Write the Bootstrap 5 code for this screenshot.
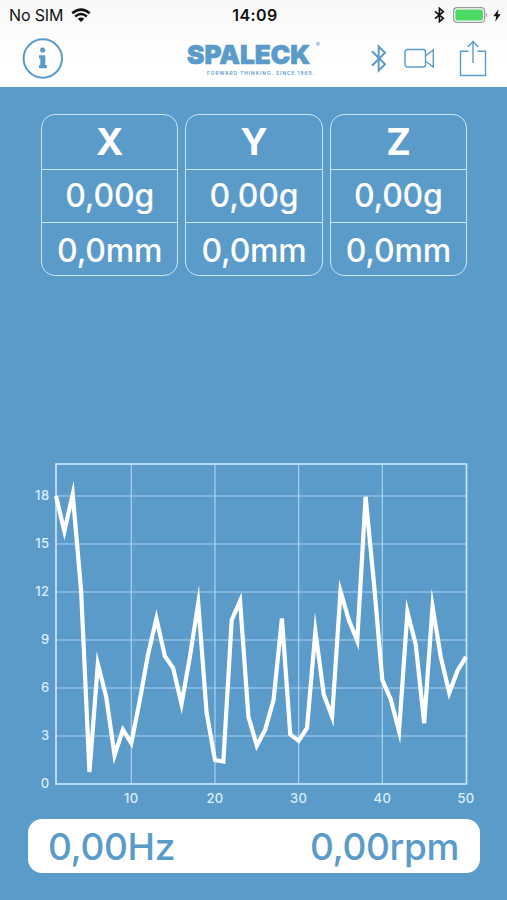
<!DOCTYPE html>
<html lang="en">
<head>
<meta charset="utf-8">
<meta name="viewport" content="width=device-width, initial-scale=1">
<title>Spaleck</title>
<link href="https://cdn.jsdelivr.net/npm/bootstrap@5.3.0/dist/css/bootstrap.min.css" rel="stylesheet">
<style>
:root { --brand: #5b9bca; --rule: #c9e4f7; }
body { font-family: Inter, "Liberation Sans", sans-serif; background: var(--brand); height: 900px; overflow: hidden; }
svg { display: block; flex: none; }
.app { width: 507px; height: 900px; }
.topbar { height: 87px; background: linear-gradient(#f8f8f8, #fff 60px); color: var(--brand); }
.status { height: 30px; color: #111; font-size: 16px; line-height: 30px; padding: 0 6px 0 9px; }
.status .side { width: 180px; }
.carrier { letter-spacing: -.15px; }
.clock { font-weight: 600; letter-spacing: .4px; }
.tools { height: 57px; padding: 0 20px 0 22px; }
.logo { margin-left: 121px; }
.bt { margin-left: 45px; }
.cam { margin-left: 16px; }
.share { margin-left: 23px; }
.axes { padding: 27px 40px 0 41px; gap: 7px; }
.axis { border: 1.5px solid var(--rule); border-radius: 14px; height: 162px; color: #fff; background: transparent; overflow: hidden; flex: 1 1 0; }
.axis > div { height: 53.5px; padding-top: 1px; display: flex; align-items: center; justify-content: center; font-size: 32px; font-weight: 500; line-height: 1; letter-spacing: -.2px; }
.axis > div + div { border-top: 1.5px solid var(--rule); }
.axis > div:last-child { padding-top: 3px; }
.axis > .axis-name { font-size: 37px; font-weight: 700; padding-top: 0; }
.plot { margin-top: 178px; }
.readout { height: 54px; margin: 1px 27px 0 28px; padding: 1px 21px 0 20px; border-radius: 14px; background: #fff; color: var(--brand); font-size: 37px; font-weight: 500; letter-spacing: -.35px; line-height: 54px; }
</style>
<script src="https://cdn.jsdelivr.net/npm/bootstrap@5.3.0/dist/js/bootstrap.bundle.min.js"></script>
</head>
<body>
<div class="app d-flex flex-column">
  <header class="topbar">
    <div class="status d-flex justify-content-between align-items-center">
      <div class="side d-flex align-items-center">
        <span class="carrier">No SIM</span>
        <svg class="ms-2" width="20" height="15" viewBox="0 0 20 15" fill="none" stroke="#111" stroke-width="2.6"><path d="M1.3 5.3Q10-2.2 18.700 5.300"/><path d="M4.200 8.400Q10 3.600 15.800 8.400"/><path d="M10 14 6.700 10.700Q10 8.200 13.300 10.700Z" fill="#111" stroke="none"/></svg>
      </div>
      <span class="clock">14:09</span>
      <div class="side d-flex justify-content-end align-items-center">
        <svg width="11" height="16" viewBox="0 0 11 16" fill="none" stroke="#111" stroke-width="1.600"><path d="M1 4.300 9.300 11.300 5.400 14.700V1.300L9.300 4.700 1 11.700"/></svg>
        <svg class="ms-2" width="36" height="16" viewBox="0 0 36 16"><rect x=".6" y=".7" width="31" height="14.600" rx="3.500" fill="#fff" stroke="#999" stroke-width="1.200"/><rect x="2.300" y="2.400" width="27.600" height="11.200" rx="1.800" fill="#4cd964"/><path d="M33.200 5.500q2 2.500 0 5z" fill="#999"/></svg>
        <svg class="ms-1" width="8" height="13" viewBox="0 0 8 13"><path d="M5.600.3.300 7.300h3L2.200 12.700 7.700 5.300H4.700z" fill="#111"/></svg>
      </div>
    </div>
    <nav class="tools d-flex align-items-center" aria-label="Tools">
      <svg width="42" height="42" viewBox="0 0 42 42"><circle cx="20.800" cy="20.500" r="19.200" fill="none" stroke="#5b9bca" stroke-width="2"/><circle cx="20.700" cy="12" r="2.600" fill="#5b9bca"/><path d="M17 17.300h6.300v9.700h1.500v3.300h-7.800V27H18.300v-6.500H17z" fill="#5b9bca"/></svg>
      <svg class="logo" width="140" height="42" viewBox="0 0 140 42" fill="#5b9bca" font-family="Inter, sans-serif"><text x="2" y="25.700" font-size="26" font-weight="900" textLength="123" lengthAdjust="spacingAndGlyphs" stroke="#5b9bca" stroke-width=".7">SPALECK</text><text x="131" y="8.500" font-size="5.500">®</text><text x="22" y="37.300" font-size="4.800" font-weight="600" textLength="107">FORWARD THINKING. SINCE 1869.</text></svg>
      <svg class="bt" width="18" height="30" viewBox="0 0 18 30" fill="none" stroke="#5b9bca" stroke-width="2"><path d="M2 7.200 15 20.300 8.700 26.500V2.500L15 8.700 2 21.800"/></svg>
      <svg class="cam" width="31" height="22" viewBox="0 0 31 22" fill="none" stroke="#5b9bca" stroke-width="1.400"><rect x="1" y="1.500" width="20.500" height="17.500" rx="2.500"/><path d="M22 7.500 29.300 2V19L22 13.500"/></svg>
      <svg class="share" width="30" height="38" viewBox="0 0 30 38" fill="none" stroke="#5b9bca" stroke-width="1.400"><path d="M10.500 11.300H2.500V35.500H27.500V11.300H19.500M15 23V2M9.800 7 15 1.500 20.200 7"/></svg>
    </nav>
  </header>

  <section class="axes d-flex">
    <div class="axis"><div class="axis-name">X</div><div>0,00g</div><div>0,0mm</div></div>
    <div class="axis"><div class="axis-name">Y</div><div>0,00g</div><div>0,0mm</div></div>
    <div class="axis"><div class="axis-name">Z</div><div>0,00g</div><div>0,0mm</div></div>
  </section>

  <svg class="plot" id="plot" width="507" height="364" viewBox="0 454 507 364" font-family="Inter, sans-serif" font-size="13" font-weight="500" letter-spacing=".4" fill="#dceefa">
    <g id="grid" stroke="#a9d2ee" stroke-width="1.200"></g>
    <rect x="56" y="464" width="410.500" height="320" fill="none" stroke="#c9e4f7" stroke-width="1.700"/>
    <g id="labels"></g>
    <polyline id="trace" fill="none" stroke="#fff" stroke-width="4.200" stroke-miterlimit="10"/>
  </svg>

  <footer class="readout d-flex justify-content-between"><span>0,00Hz</span><span>0,00rpm</span></footer>
</div>
<script>
// Plot scale: x 1..50 across 56..466, 16 px per unit upwards from 784.
const X = v => 56 + (v - 1) * 410 / 49, Y = v => 784 - v * 16;
const samples = [18, 15.8, 18.1, 12.1, .75, 7.5, 5.45, 1.8, 3.4, 2.55, 5.2, 8.1, 10.35, 8, 7.25, 5, 7.95, 11.3, 4.45, 1.5, 1.4, 10.25, 11.45, 4.2, 2.4, 3.4, 5.25, 10.35, 3.1, 2.7, 3.5, 9.55, 5.6, 4.2, 12.05, 10.25, 8.95, 17.95, 12.55, 6.5, 5.3, 3.3, 10.75, 8.7, 3.8, 11.1, 7.9, 5.7, 7.1, 7.95];
let grid = '', labels = '';
for (let v = 0; v <= 18; v += 3) {
  if (v) grid += `<path d="M56 ${Y(v)}H466"/>`;
  labels += `<text x="49.5" y="${Y(v) + 4}" text-anchor="end">${v}</text>`;
}
for (let v = 10; v <= 50; v += 10) {
  if (v < 50) grid += `<path d="M${X(v)} 464V784"/>`;
  labels += `<text x="${X(v)}" y="803" text-anchor="middle">${v}</text>`;
}
document.getElementById('grid').innerHTML = grid;
document.getElementById('labels').innerHTML = labels;
document.getElementById('trace').setAttribute('points', samples.map((s, i) => `${X(i + 1)},${Y(s)}`).join(' '));
</script>
</body>
</html>
